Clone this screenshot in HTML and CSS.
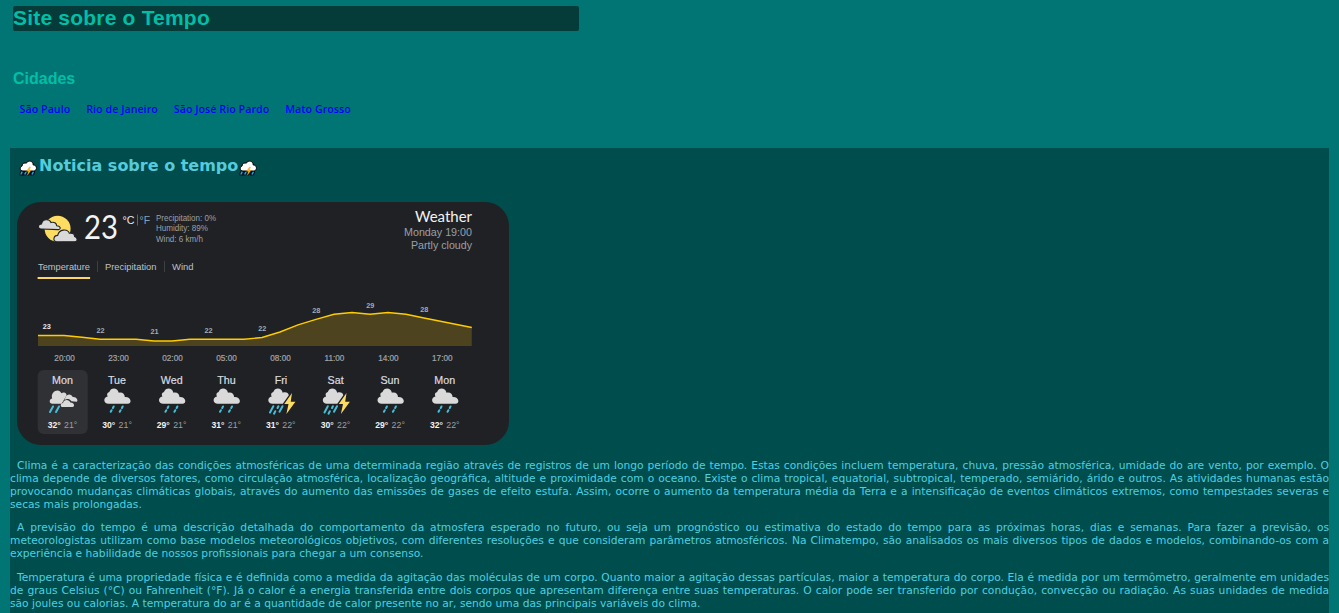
FILE: index.html
```html
<!DOCTYPE html>
<html lang="pt-br">
<head>
<meta charset="utf-8">
<title>Site sobre o Tempo</title>
<link rel="stylesheet" href="styles.css">
</head>
<body>
<header class="top">
  <h1 class="site-title"><span>Site sobre o Tempo</span></h1>
  <h2 class="cities-title">Cidades</h2>
  <nav class="cities">
    <a href="#">São Paulo</a>
    <a href="#">Rio de Janeiro</a>
    <a href="#">São José Rio Pardo</a>
    <a href="#">Mato Grosso</a>
  </nav>
</header>
<main class="news">
  <h2 class="news-title">
    <svg class="storm" viewBox="0 0 18 16"><use href="#storm"/></svg>
    <span>Noticia sobre o tempo</span>
    <svg class="storm" viewBox="0 0 18 16"><use href="#storm"/></svg>
  </h2>
  <svg class="weather" viewBox="17 202 492 243">
    <defs>
      <g id="storm">
        <path d="M1.500 10.500h14.500v2l-1 3h-3.500l-.5-1-1 1H8l-.5-1-1 1H.500v-2z" fill="#04131a"/>
        <path d="M3.300 11.500 1.800 14.500M7.200 11.500 5.700 14.500M14.500 11.500 13 14.500" stroke="#19a7e8" stroke-width="1.500"/>
        <path d="M4 11C.700 11 .200 6.800 3 6.100 3.100 3.200 6 2.400 7.300 3.200 8.800-.3 14.200.700 14.200 4.900 18.600 5 18.300 11 14.700 11z" fill="#fff" stroke="#000" stroke-width="1"/>
        <path d="M10.300 7.200 7.600 11.200h1.800l-1 4 3.600-5h-2l1.500-3z" fill="#ffc21a" stroke="#e88a12" stroke-width=".4"/>
      </g>
      <path id="cloud" d="M4.500 15.300C-.7 15.300-1.100 8.700 3.700 8 2.200 4.800 4.200 3.700 5.300 3.400 6.900-1.300 13.500-1.200 14.700 4.200 18.200 3.300 20.800 5.400 20.800 8.500 27.500 8 28.300 15.300 23.700 15.300z" fill="#dadada"/>
      <g id="rain">
        <use href="#cloud"/>
        <path d="M9.700 18 8.900 19.500M7.600 21.700 6.700 23.300M18.700 18 17.900 19.500M16.600 21.700 15.700 23.300" class="drop"/>
      </g>
      <g id="thunder">
        <path d="M4.500 15.300C-.7 15.300-1.100 8.700 3.700 8 2.200 4.800 4.200 3.700 5.300 3.400 6.900-1.300 13.500-1.200 14.700 4.200 18 3 20.500 4.500 20.800 6.800L14.800 15.300z" fill="#dadada"/>
        <path d="M5.300 17.700 2 24M10.400 17.700 9.500 19.500M7.300 22.700 6 25.200M14.500 17.700 11.500 23.200" class="drop"/>
        <path d="M24 4.500 16.300 15.500H20.500L18.400 25.500 27.400 13.300H22.700z" fill="#fddc62"/>
      </g>
    </defs>
    <rect x="17" y="202" width="492" height="243" rx="24" fill="#202125"/>
    <circle cx="57.600" cy="228.800" r="13" fill="#fddc62"/>
    <path d="M41 229C37.500 229 37.500 224.200 41.500 224 42.500 218.600 49.500 218.500 51 222.500 55 221.400 56.500 224 56.700 225.700 61 225.800 61 229.600 58.500 229.600z" fill="#d9d9d9" stroke="#202125" stroke-width="1.100"/>
    <path d="M57 241.800C52.500 241.800 53 235.700 57.700 235.400 59 229 67.500 228.500 69.300 233.200 73.500 232.700 74.500 234.500 74.600 236.500 78 237.500 77.800 241.800 75 241.800z" fill="#d9d9d9" stroke="#202125" stroke-width="1.100"/>
    <text x="84" y="238.500" class="temp" textLength="34" lengthAdjust="spacingAndGlyphs">23</text>
    <text x="122.500" y="223.800" class="unit" fill="#e8eaed" textLength="12" lengthAdjust="spacingAndGlyphs">°C</text>
    <path d="M137.500 214.500v11" stroke="#5f6368" stroke-width="1"/>
    <text x="139.500" y="223.800" class="unit" fill="#86a0b4" textLength="10.500" lengthAdjust="spacingAndGlyphs">°F</text>
    <g class="details">
      <text x="156" y="220.700" textLength="60" lengthAdjust="spacingAndGlyphs">Precipitation: 0%</text>
      <text x="156" y="231.300" textLength="52" lengthAdjust="spacingAndGlyphs">Humidity: 89%</text>
      <text x="156" y="242" textLength="47" lengthAdjust="spacingAndGlyphs">Wind: 6 km/h</text>
    </g>
    <text x="415" y="222" class="heading" textLength="57" lengthAdjust="spacingAndGlyphs">Weather</text>
    <g class="when">
      <text x="404" y="236" textLength="68" lengthAdjust="spacingAndGlyphs">Monday 19:00</text>
      <text x="411" y="249.300" textLength="61" lengthAdjust="spacingAndGlyphs">Partly cloudy</text>
    </g>
    <g class="tabs">
      <text x="38" y="270" textLength="52" lengthAdjust="spacingAndGlyphs">Temperature</text>
      <text x="105" y="270" textLength="51.500" lengthAdjust="spacingAndGlyphs">Precipitation</text>
      <text x="172" y="270" textLength="21.500" lengthAdjust="spacingAndGlyphs">Wind</text>
    </g>
    <path d="M97.500 261v11M164.500 261v11" stroke="#3c4043"/>
    <rect x="37.600" y="277" width="52.500" height="2" fill="#fdd663"/>
    <path d="M38 335.500H64L82 337.300 100 339.300H136L154 341H172L190 339.300H244L262 337.500 280 332 298 324.800 316 319.300 334 314.300 352 312.500 370 314.300 388 312.500 406 314.300 424 318 448 322.700 471.800 327.500V346H38z" fill="#4d431e"/>
    <path d="M38 335.500H64L82 337.300 100 339.300H136L154 341H172L190 339.300H244L262 337.500 280 332 298 324.800 316 319.300 334 314.300 352 312.500 370 314.300 388 312.500 406 314.300 424 318 448 322.700 471.800 327.500" fill="none" stroke="#fc0" stroke-width="1.400"/>
    <g class="points">
      <text x="46.700" y="329" fill="#e8eaed">23</text>
      <text x="100.500" y="333">22</text>
      <text x="154.500" y="334.300">21</text>
      <text x="208.500" y="333">22</text>
      <text x="262.300" y="331">22</text>
      <text x="316.300" y="313">28</text>
      <text x="370.200" y="307.700">29</text>
      <text x="424.200" y="311.700">28</text>
    </g>
    <g class="hours">
      <text x="64.600" y="361">20:00</text>
      <text x="118.500" y="361">23:00</text>
      <text x="172.500" y="361">02:00</text>
      <text x="226.500" y="361">05:00</text>
      <text x="280.500" y="361">08:00</text>
      <text x="334.400" y="361">11:00</text>
      <text x="388.400" y="361">14:00</text>
      <text x="442.300" y="361">17:00</text>
    </g>
    <rect x="37.700" y="370" width="50" height="64" rx="6" fill="#303134"/>
    <g class="days">
      <text x="62.500" y="383.500">Mon</text>
      <text x="117" y="383.500">Tue</text>
      <text x="171.700" y="383.500">Wed</text>
      <text x="226.500" y="383.500">Thu</text>
      <text x="281" y="383.500">Fri</text>
      <text x="335.600" y="383.500">Sat</text>
      <text x="390" y="383.500">Sun</text>
      <text x="444.700" y="383.500">Mon</text>
    </g>
    <path d="M52.500 403.700C48.700 403.700 49 398.800 52.200 398.400 50 392 59 387.500 61.300 393.300 64.500 391.300 67 393.500 66.500 395.500L61.600 403.700z" fill="#dadada"/>
    <path d="M64.500 400.300 65.600 397C67 393.500 71.500 393.700 72.700 397 76.300 396.300 78.700 400.700 76.700 401.700L71.500 401.300C69 398.200 66.500 398.800 64.500 400.300zM63 407C59.500 407 60.500 403 63 402.900 64 399 69.500 399.500 70.300 402.600 74.700 402.500 75 407 72.500 407z" fill="#dadada"/>
    <path d="M53 406.500 50 412M59 406.500 56 412" class="drop"/>
    <use href="#rain" x="104" y="388.500"/>
    <use href="#rain" x="158.700" y="388.500"/>
    <use href="#rain" x="213.300" y="388.500"/>
    <use href="#thunder" x="268" y="388.500"/>
    <use href="#thunder" x="322.500" y="388.500"/>
    <use href="#rain" x="377.200" y="388.500"/>
    <use href="#rain" x="431.800" y="388.500"/>
    <g class="range">
      <text x="47.700" y="427.700" class="max">32°</text><text x="64" y="427.700">21°</text>
      <text x="102.300" y="427.700" class="max">30°</text><text x="118.600" y="427.700">21°</text>
      <text x="156.800" y="427.700" class="max">29°</text><text x="173.200" y="427.700">21°</text>
      <text x="211.500" y="427.700" class="max">31°</text><text x="227.800" y="427.700">21°</text>
      <text x="266" y="427.700" class="max">31°</text><text x="282.300" y="427.700">22°</text>
      <text x="320.700" y="427.700" class="max">30°</text><text x="337" y="427.700">22°</text>
      <text x="375.200" y="427.700" class="max">29°</text><text x="391.600" y="427.700">22°</text>
      <text x="430" y="427.700" class="max">32°</text><text x="446.300" y="427.700">22°</text>
    </g>
  </svg>
  <p>
    <span class="indent">Clima é a caracterização das condições atmosféricas de uma determinada região através de registros de um longo período de tempo. Estas condições incluem temperatura, chuva, pressão atmosférica, umidade do are vento, por exemplo. O</span>
    <span>clima depende de diversos fatores, como circulação atmosférica, localização geográfica, altitude e proximidade com o oceano. Existe o clima tropical, equatorial, subtropical, temperado, semiárido, árido e outros. As atividades humanas estão</span>
    <span>provocando mudanças climáticas globais, através do aumento das emissões de gases de efeito estufa. Assim, ocorre o aumento da temperatura média da Terra e a intensificação de eventos climáticos extremos, como tempestades severas e</span>
    <span class="last">secas mais prolongadas.</span>
  </p>
  <p>
    <span class="indent">A previsão do tempo é uma descrição detalhada do comportamento da atmosfera esperado no futuro, ou seja um prognóstico ou estimativa do estado do tempo para as próximas horas, dias e semanas. Para fazer a previsão, os</span>
    <span>meteorologistas utilizam como base modelos meteorológicos objetivos, com diferentes resoluções e que consideram parâmetros atmosféricos. Na Climatempo, são analisados os mais diversos tipos de dados e modelos, combinando-os com a</span>
    <span class="last">experiência e habilidade de nossos profissionais para chegar a um consenso.</span>
  </p>
  <p>
    <span class="indent">Temperatura é uma propriedade física e é definida como a medida da agitação das moléculas de um corpo. Quanto maior a agitação dessas partículas, maior a temperatura do corpo. Ela é medida por um termômetro, geralmente em unidades</span>
    <span>de graus Celsius (°C) ou Fahrenheit (°F). Já o calor é a energia transferida entre dois corpos que apresentam diferença entre suas temperaturas. O calor pode ser transferido por condução, convecção ou radiação. As suas unidades de medida</span>
    <span class="last">são joules ou calorias. A temperatura do ar é a quantidade de calor presente no ar, sendo uma das principais variáveis do clima.</span>
  </p>
</main>
</body>
</html>
```
FILE: styles.css
```css
* { box-sizing: border-box; }
html { height: 100%; overflow: hidden; }
body {
  margin: 0;
  height: 613px;
  overflow: hidden;
  padding: 6px 10px 0;
  background: #007573;
  font-family: "DejaVu Sans", Verdana, sans-serif;
}
.top { height: 142px; padding-left: 3px; }
.site-title {
  width: 566px;
  height: 25px;
  margin: 0;
  border-radius: 2px;
  background: #053b39;
  color: #00bfa8;
  font: bold 21px/24px "Liberation Sans", Arial, sans-serif;
  letter-spacing: .2px;
}
.cities-title {
  margin: 38px 0 0;
  color: #00bfa8;
  font: bold 16px/20px "Liberation Sans", Arial, sans-serif;
}
.cities { display: flex; gap: 16px; margin: 11px 0 0 6.6px; }
.cities a {
  color: #0000ff;
  text-decoration: none;
  white-space: nowrap;
  font: 600 10.5px/18px "Open Sans", sans-serif;
  letter-spacing: .12px;
}
.news { height: 480px; padding-top: 8px; background: #004d4d; color: #4dd0e1; }
.news-title {
  display: flex;
  align-items: center;
  height: 20px;
  margin: 0 0 0 9px;
  color: #56cbdc;
  font: bold 16px/20px "DejaVu Sans", Verdana, sans-serif;
}
.news-title span { margin: 0 1px 0 2px; white-space: nowrap; }
.storm { width: 18px; height: 16px; margin-top: 4px; }
.weather {
  display: block;
  width: 492px;
  height: 243px;
  margin: 26px 0 14px 7px;
  font-family: "Liberation Sans", Arial, sans-serif;
}
.temp { font-family: Lato, Roboto, sans-serif; font-size: 32.5px; fill: #f1f3f4; }
.unit { font-size: 11px; }
.details { font-size: 8.7px; fill: #9aa0a6; }
.heading { font-family: Lato, Roboto, sans-serif; font-size: 14.5px; fill: #f1f3f4; }
.when { font-size: 11px; fill: #9aa0a6; }
.tabs { font-size: 9.5px; fill: #bdc1c6; }
.points { font-size: 7.3px; font-weight: bold; text-anchor: middle; fill: #a6abb0; }
.hours { font-size: 8.2px; text-anchor: middle; fill: #a0a5aa; stroke: #a0a5aa; stroke-width: .2; }
.days { font-size: 10.7px; text-anchor: middle; fill: #dadce0; stroke: #dadce0; stroke-width: .2; }
.range { font-size: 8.8px; fill: #9aa0a6; }
.range .max { font-weight: bold; font-size: 8.6px; fill: #f1f3f4; }
.drop { fill: none; stroke: #44bfd8; stroke-width: 2; stroke-linecap: round; }
.news p { margin: 0 0 10px; font-size: 10.7px; line-height: 13px; }
.news p + p + p { margin-top: 11px; }
.news p span {
  display: block;
  height: 13px;
  white-space: nowrap;
  text-align: justify;
  text-align-last: justify;
}
.news p .indent { padding-left: 7px; }
.news p .last { text-align-last: left; }
```
